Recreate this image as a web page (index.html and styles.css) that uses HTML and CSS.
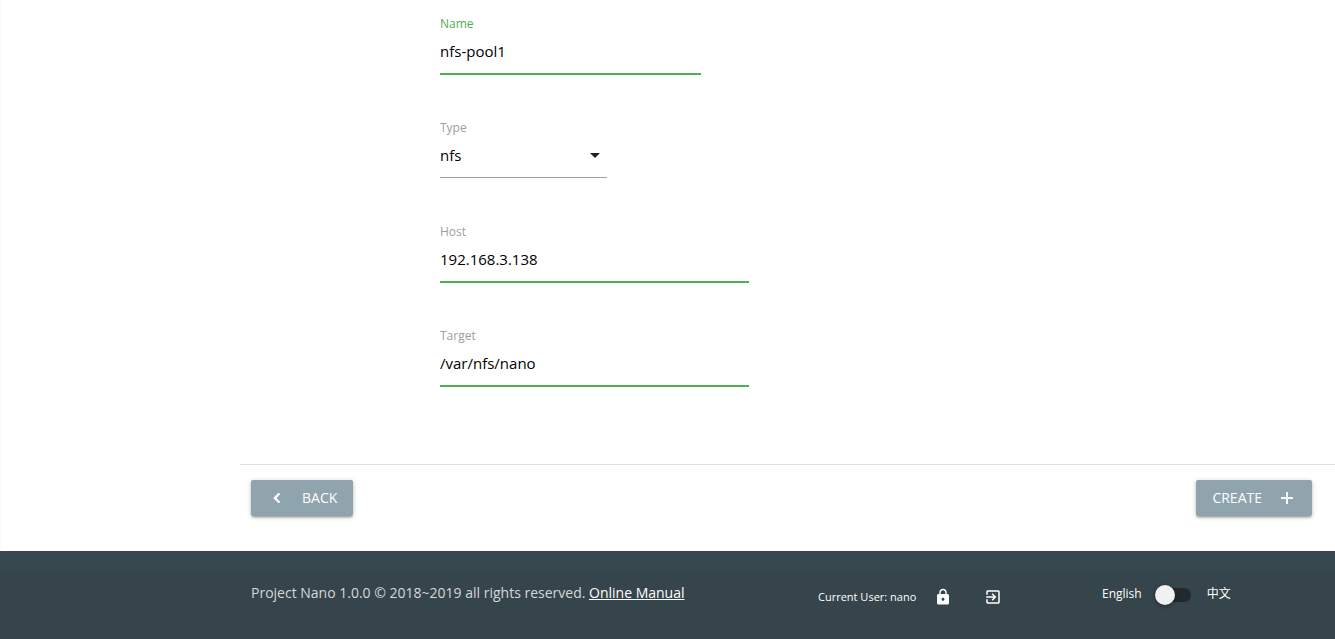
FILE: index.html
```
<!DOCTYPE html>
<html lang="en">
<head>
<meta charset="utf-8">
<meta name="viewport" content="width=device-width, initial-scale=1">
<title>Project Nano</title>
<link rel="stylesheet" href="styles.css">
</head>
<body>
<main class="content">
  <form class="pool-form" id="pool-form">
    <div class="field field-name">
      <label class="field-label field-label-active" for="name">Name</label>
      <input class="field-input" id="name" type="text" value="nfs-pool1">
    </div>
    <div class="field field-type">
      <label class="field-label" for="type">Type</label>
      <div class="select-box">
        <select class="field-input field-select" id="type"><option>nfs</option></select>
        <svg class="caret" viewBox="0 0 24 24" aria-hidden="true"><path d="M7 10l5 5 5-5z"/></svg>
      </div>
    </div>
    <div class="field">
      <label class="field-label" for="host">Host</label>
      <input class="field-input" id="host" type="text" value="192.168.3.138">
    </div>
    <div class="field">
      <label class="field-label" for="target">Target</label>
      <input class="field-input" id="target" type="text" value="/var/nfs/nano">
    </div>
  </form>
  <div class="actions">
    <button class="btn btn-back" type="button">
      <svg class="btn-icon" viewBox="0 0 24 24" aria-hidden="true"><path d="M15.41 7.41L14 6l-6 6 6 6 1.41-1.41L10.83 12z"/></svg>
      <span>BACK</span>
    </button>
    <button class="btn btn-create" type="submit" form="pool-form">
      <span>CREATE</span>
      <svg class="btn-icon" viewBox="0 0 24 24" aria-hidden="true"><path d="M20 13.200h-6.800V20h-2.400v-6.800H4v-2.400h6.800V4h2.400v6.800H20z"/></svg>
    </button>
  </div>
</main>
<footer class="footer">
  <div class="footer-bar">
    <p class="copyright">Project Nano 1.0.0 © 2018~2019 all rights reserved. <a class="manual" href="#manual">Online Manual</a></p>
    <div class="user">
      <span>Current User: nano</span>
      <a class="user-link" href="#password" aria-label="Change password"><svg class="user-icon" viewBox="0 0 24 24" aria-hidden="true"><path d="M18 8h-1V6c0-2.76-2.24-5-5-5S7 3.24 7 6v2H6c-1.100 0-2 .9-2 2v10c0 1.100.9 2 2 2h12c1.100 0 2-.9 2-2V10c0-1.100-.9-2-2-2zm-6 9c-1.100 0-2-.9-2-2s.9-2 2-2 2 .9 2 2-.9 2-2 2zm3.100-9H8.900V6c0-1.710 1.390-3.100 3.100-3.100s3.100 1.390 3.100 3.100v2z"/></svg></a>
      <a class="user-link" href="#logout" aria-label="Log out"><svg class="user-icon" viewBox="0 0 24 24" aria-hidden="true"><path d="M10.090 15.590L11.500 17l5-5-5-5-1.410 1.410L12.670 11H3v2h9.670l-2.580 2.590zM19 3H5c-1.110 0-2 .9-2 2v4h2V5h14v14H5v-4H3v4c0 1.100.89 2 2 2h14c1.100 0 2-.9 2-2V5c0-1.100-.9-2-2-2z"/></svg></a>
    </div>
    <label class="language">
      <span>English</span>
      <input class="switch" type="checkbox" role="switch">
      <span lang="zh">中文</span>
    </label>
  </div>
</footer>
</body>
</html>
```
FILE: styles.css
```
* { box-sizing: border-box; }
body {
  margin: 0;
  min-height: 100vh;
  display: flex;
  flex-direction: column;
  background: #fff;
  box-shadow: inset 1px 0 #fafafa;
  color: #000;
  font-family: "Open Sans", "Noto Sans", "Noto Sans CJK SC", sans-serif;
  font-size: 14px;
}
.content { padding-left: 240px; }
.pool-form {
  display: flex;
  flex-direction: column;
  gap: 44px;
  padding: 16px 16px 76px 200px;
}
.field { width: 309px; max-width: 100%; }
.field-name { width: 261px; }
.field-type { width: 167px; }
.field-label {
  display: block;
  font-size: 12px;
  line-height: 16px;
  color: #9e9e9e;
}
.field-label-active { color: #4caf50; }
.field-input {
  display: block;
  width: 100%;
  height: 43px;
  margin: 0 0 1px;
  padding: 0 0 4px;
  border: 0;
  border-bottom: 2px solid #4caf50;
  border-radius: 0;
  outline: 0;
  background: transparent;
  color: #000;
  font-family: inherit;
  font-size: 15px;
}
.select-box {
  position: relative;
  height: 44px;
}
.field-select {
  appearance: none;
  height: 42px;
  border-bottom: 1px solid #9e9e9e;
}
.caret {
  position: absolute;
  top: 7px;
  right: 0;
  width: 24px;
  height: 24px;
  fill: #212121;
  pointer-events: none;
}
.actions {
  display: flex;
  justify-content: space-between;
  border-top: 1px solid #e0e0e0;
  padding: 15px 23px 35px 11px;
}
.btn {
  display: flex;
  align-items: center;
  height: 36px;
  padding: 0 16px;
  border: 0;
  border-radius: 2px;
  background: #90a4ae;
  color: #fff;
  font-family: inherit;
  font-size: 14px;
  line-height: 20px;
  box-shadow: 0 2px 2px rgba(0,0,0,.14), 0 3px 1px -2px rgba(0,0,0,.12), 0 1px 5px rgba(0,0,0,.2);
}
.btn-back { gap: 15px; }
.btn-create { gap: 16px; }
.btn-icon { width: 18px; height: 18px; fill: #fff; flex: none; }
.btn-back .btn-icon { width: 20px; height: 20px; stroke: #fff; }
.footer {
  flex: 1;
  display: flex;
  padding-top: 20px;
  background: #37474f;
  color: #fff;
}
.footer-bar {
  flex: 1;
  display: grid;
  grid-template-columns: 567fr 284fr 233fr;
  align-items: start;
  padding: 10px 0 10px 251px;
  background: rgba(51,51,51,.12);
}
.copyright { margin: 0; line-height: 24px; color: #d4d8da; }
.manual { color: #fff; }
.user, .language {
  display: flex;
  align-items: center;
  font-size: 12px;
}
.user { font-size: 11px; line-height: 32px; }
.user-link { display: flex; margin-left: 18px; }
.user-link + .user-link { margin-left: 32px; }
.user-icon { width: 18px; height: 18px; fill: #fff; }
.language { line-height: 26px; }
.switch {
  appearance: none;
  display: flex;
  align-items: center;
  width: 36px;
  height: 14px;
  margin: 2px 16px 0 13px;
  border-radius: 8px;
  background: #22292d;
}
.switch::before {
  content: "";
  width: 20px;
  height: 20px;
  flex: none;
  border-radius: 50%;
  background: #f1f1f1;
  box-shadow: 0 1px 4px rgba(0,0,0,.4);
}
.switch:checked { justify-content: flex-end; }
```
